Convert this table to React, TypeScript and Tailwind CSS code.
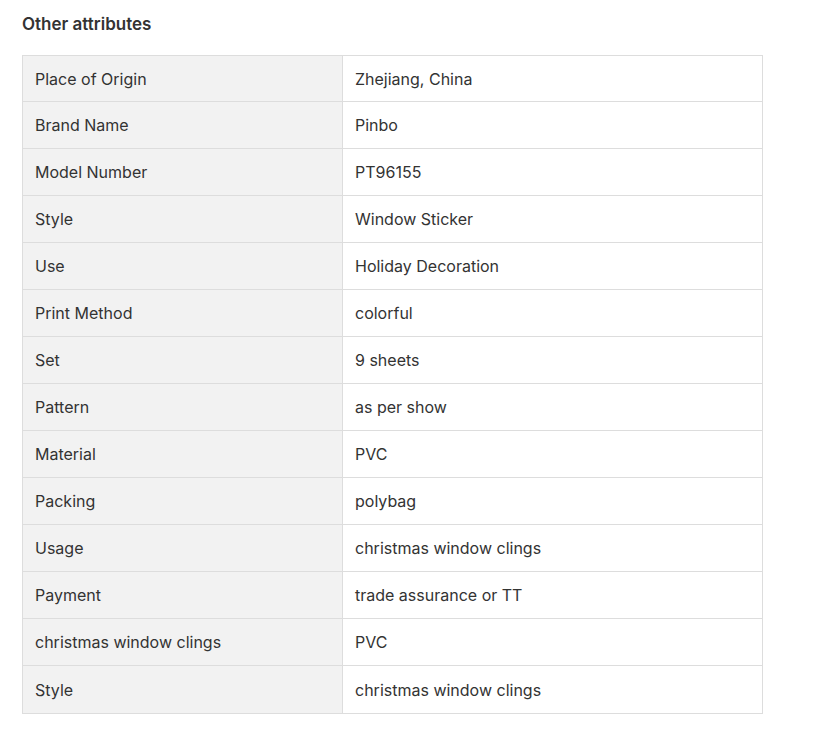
const rows: [string, string][] = [
  ["Place of Origin", "Zhejiang, China"],
  ["Brand Name", "Pinbo"],
  ["Model Number", "PT96155"],
  ["Style", "Window Sticker"],
  ["Use", "Holiday Decoration"],
  ["Print Method", "colorful"],
  ["Set", "9 sheets"],
  ["Pattern", "as per show"],
  ["Material", "PVC"],
  ["Packing", "polybag"],
  ["Usage", "christmas window clings"],
  ["Payment", "trade assurance or TT"],
  ["christmas window clings", "PVC"],
  ["Style", "christmas window clings"],
];

const App = () => {
  return (
    <div className="min-h-screen bg-white px-[22px] pt-[12px] text-[#333] font-['Inter',sans-serif]">
      <h2 className="text-[17px] leading-6 font-semibold mb-[19px]">Other attributes</h2>

      {/* Attribute table */}
      <div className="w-[741px] border border-[#ddd] divide-y divide-[#ddd]">
        {rows.map(([label, value], i) => (
          <div key={i} className="flex h-[47px] first:h-[46px] text-base">
            <div className="w-[320px] shrink-0 flex items-center px-3 bg-[#f2f2f2] border-r border-[#ddd]">
              {label}
            </div>
            <div className="flex-1 flex items-center px-3">{value}</div>
          </div>
        ))}
      </div>
    </div>
  );
};

export default App;
